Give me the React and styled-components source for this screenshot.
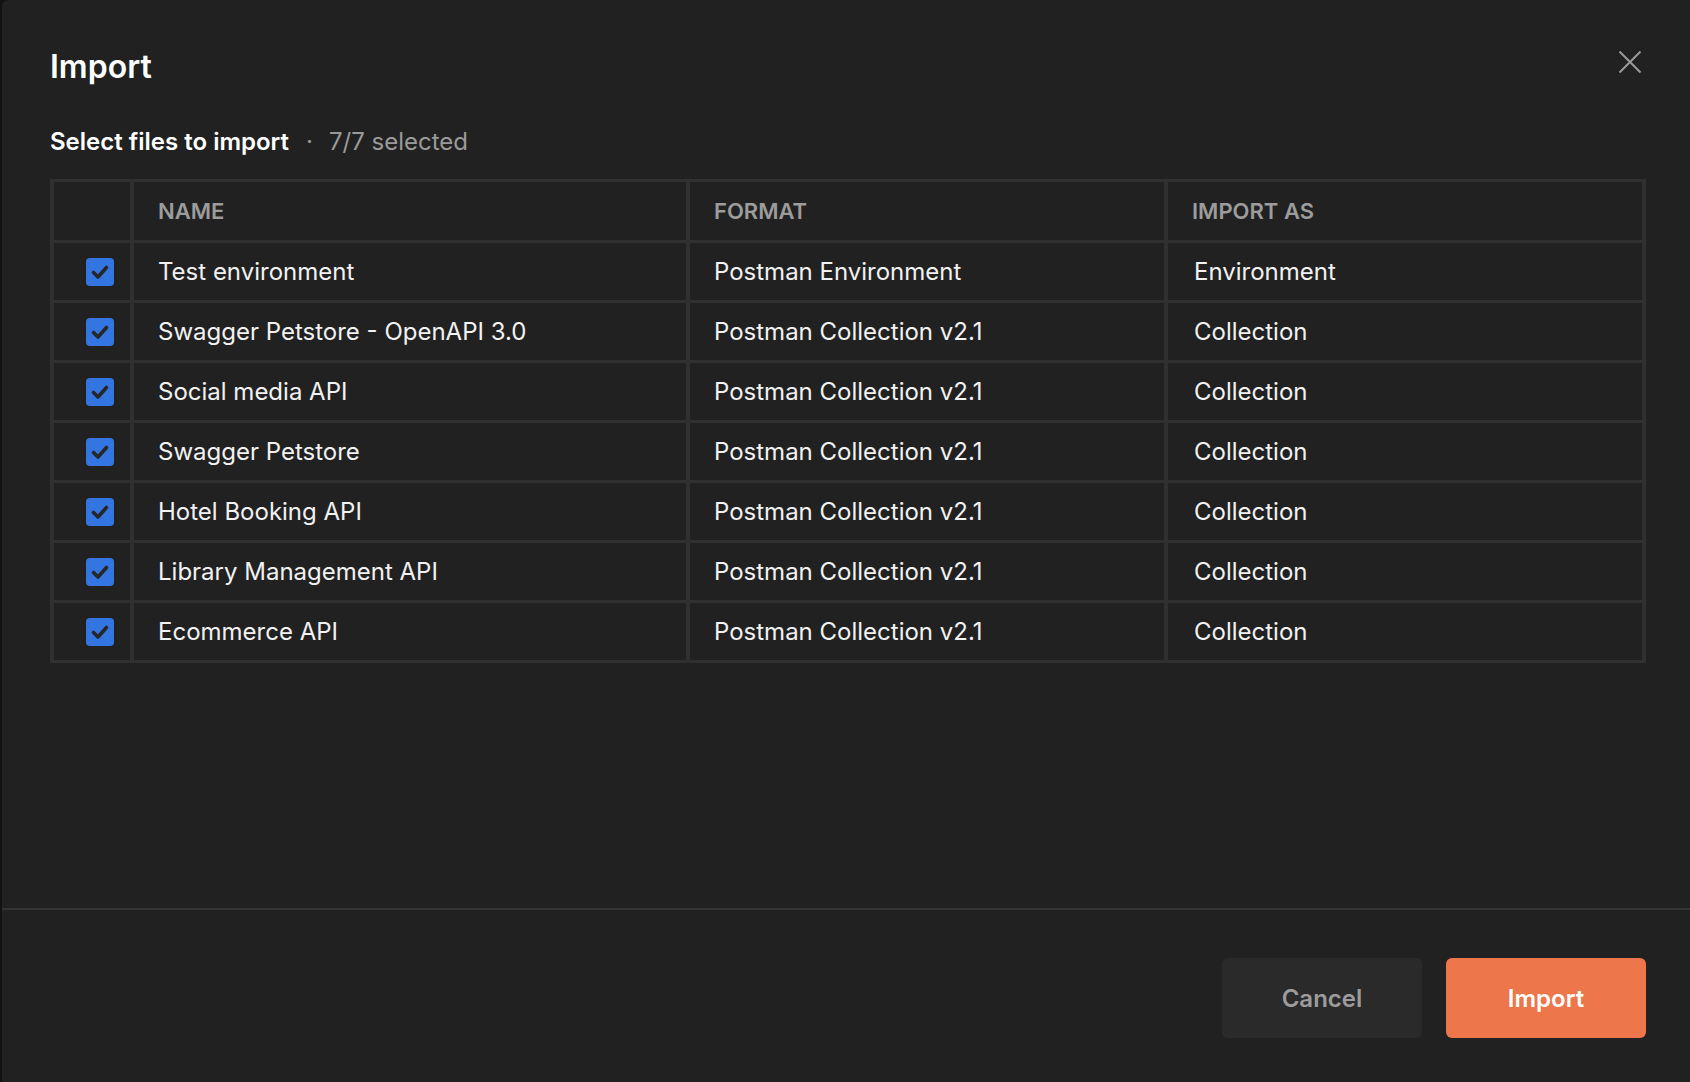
import React from "react";
import styled, { createGlobalStyle } from "styled-components";

const Global = createGlobalStyle`
  html, body { margin: 0; padding: 0; background: #121212; overflow: hidden; }
  body { font-family: Inter, "Noto Sans", "Liberation Sans", sans-serif; -webkit-font-smoothing: antialiased; }
  * { box-sizing: border-box; }
`;

const Page = styled.div`
  width: 1690px;
  height: 1082px;
  padding-left: 2px;
  overflow: hidden;
`;

const Modal = styled.div`
  width: 1692px;
  height: 1082px;
  background: #212121;
  border-top-left-radius: 6px;
  display: flex;
  flex-direction: column;
`;

const Body = styled.div`
  flex: 0 0 908px;
  padding: 47px 48px 0 48px;
  display: flex;
  flex-direction: column;
`;

const Header = styled.div`
  display: flex;
  justify-content: space-between;
  align-items: flex-start;
`;

const Title = styled.h1`
  margin: 0;
  font-size: 32px;
  line-height: 40px;
  font-weight: 600;
  color: #ffffff;
`;

const CloseButton = styled.button`
  width: 32px;
  height: 32px;
  margin-top: -1px;
  padding: 0;
  border: 0;
  background: transparent;
  display: flex;
  align-items: center;
  justify-content: center;
  cursor: pointer;
`;

const Subtitle = styled.div`
  margin-top: 39px;
  font-size: 24px;
  line-height: 32px;
  display: flex;
  align-items: center;
`;

const Strong = styled.span`
  font-weight: 600;
  color: #ffffff;
`;

const Dot = styled.span`
  color: #9a9a9a;
  margin: 0 16px 0 17px;
`;

const Muted = styled.span`
  color: #9a9a9a;
  font-weight: 400;
`;

const Table = styled.div`
  margin-top: 21px;
  display: grid;
  grid-template-columns: 76px 552px 1fr 1fr;
  grid-auto-rows: 57px;
  grid-template-rows: 58px;
  gap: 3px 4px;
  padding: 3px 4px;
  background: #303030;
`;

const Cell = styled.div`
  background: #212121;
  display: flex;
  align-items: center;
  padding: 0 24px 0 ${(p) => (p.$shift ? "26px" : "24px")};
  font-size: ${(p) => (p.$head ? "22px" : "24px")};
  color: ${(p) => (p.$head ? "#9c9c9c" : "#f2f2f2")};
  font-weight: ${(p) => (p.$head ? 600 : 400)};
  white-space: nowrap;
`;

const CheckCell = styled(Cell)`
  padding: 0 0 0 32px;
`;

const Checkbox = styled.span`
  width: 28px;
  height: 28px;
  border-radius: 4px;
  background: #3476e1;
  display: inline-flex;
  align-items: center;
  justify-content: center;
`;

const Footer = styled.div`
  border-top: 2px solid #333333;
  padding: 48px 48px 0 0;
  display: flex;
  justify-content: flex-end;
  gap: 24px;
`;

const Button = styled.button`
  width: 200px;
  height: 80px;
  border: 0;
  border-radius: 6px;
  font-family: inherit;
  font-size: 24px;
  font-weight: 600;
  cursor: pointer;
  background: ${(p) => (p.$primary ? "#ed764a" : "#2a2a2a")};
  color: ${(p) => (p.$primary ? "#ffffff" : "#9c9c9c")};
`;

const rows = [
  ["Test environment", "Postman Environment", "Environment"],
  ["Swagger Petstore - OpenAPI 3.0", "Postman Collection v2.1", "Collection"],
  ["Social media API", "Postman Collection v2.1", "Collection"],
  ["Swagger Petstore", "Postman Collection v2.1", "Collection"],
  ["Hotel Booking API", "Postman Collection v2.1", "Collection"],
  ["Library Management API", "Postman Collection v2.1", "Collection"],
  ["Ecommerce API", "Postman Collection v2.1", "Collection"],
];

const Check = () => (
  <Checkbox>
    <svg width="28" height="28" viewBox="0 0 28 28">
      <polyline
        points="7.5,14.5 12,19 20.5,9.5"
        fill="none"
        stroke="#262626"
        strokeWidth="3.6"
        strokeLinecap="round"
        strokeLinejoin="round"
      />
    </svg>
  </Checkbox>
);

export default function App() {
  return (
    <>
      <Global />
      <Page>
        <Modal>
          <Body>
            <Header>
              <Title>Import</Title>
              <CloseButton aria-label="Close">
                <svg width="24" height="24" viewBox="0 0 24 24">
                  <path d="M1.5 1.5 L22.5 22.5 M22.5 1.5 L1.5 22.5" stroke="#9a9a9a" strokeWidth="2" fill="none" />
                </svg>
              </CloseButton>
            </Header>
            <Subtitle>
              <Strong>Select files to import</Strong>
              <Dot>·</Dot>
              <Muted>7/7 selected</Muted>
            </Subtitle>
            <Table>
              <CheckCell $head />
              <Cell $head>NAME</Cell>
              <Cell $head>FORMAT</Cell>
              <Cell $head>IMPORT AS</Cell>
              {rows.map(([name, format, as]) => (
                <React.Fragment key={name}>
                  <CheckCell>
                    <Check />
                  </CheckCell>
                  <Cell>{name}</Cell>
                  <Cell>{format}</Cell>
                  <Cell $shift>{as}</Cell>
                </React.Fragment>
              ))}
            </Table>
          </Body>
          <Footer>
            <Button>Cancel</Button>
            <Button $primary>Import</Button>
          </Footer>
        </Modal>
      </Page>
    </>
  );
}
